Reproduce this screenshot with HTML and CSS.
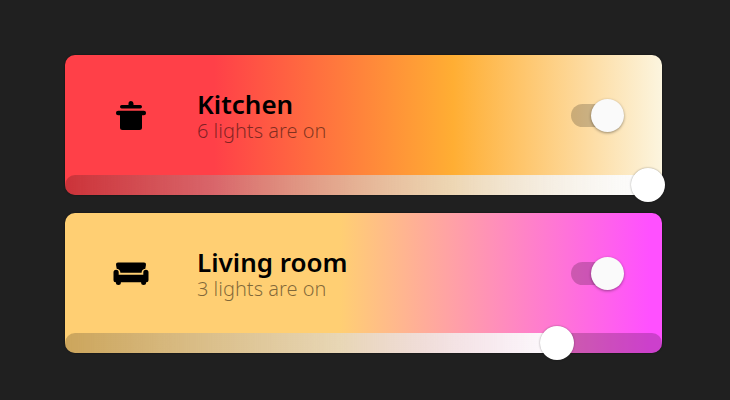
FILE: index.html
```html
<!DOCTYPE html>
<html lang="en">
<head>
<meta charset="utf-8">
<meta name="viewport" content="width=device-width, initial-scale=1">
<title>Lights</title>
<link rel="stylesheet" href="styles.css">
</head>
<body>
<main class="rooms">
  <section class="room room-kitchen">
    <div class="room-body">
      <svg class="room-icon" viewBox="0 0 36 36" aria-hidden="true">
        <path d="M15.500 8V6.400a2.500 2.500 0 0 1 5 0V8H27.300a1.700 1.700 0 0 1 0 3.400H8.700a1.700 1.700 0 0 1 0-3.400z"/>
        <path d="M5.200 13.800H30.800a2.200 2.200 0 0 1 0 4.500H29V30.500a2.500 2.500 0 0 1-2.500 2.500H9.500a2.500 2.500 0 0 1-2.500-2.500V18.300H5.200a2.200 2.200 0 0 1 0-4.500z"/>
      </svg>
      <div class="room-text">
        <h2 class="room-name" id="kitchen">Kitchen</h2>
        <p class="room-status">6 lights are on</p>
      </div>
      <input class="switch" type="checkbox" role="switch" aria-labelledby="kitchen" checked>
    </div>
    <div class="dimmer" style="--level: 100%">
      <input class="dimmer-input" type="range" min="0" max="100" value="100" aria-labelledby="kitchen">
    </div>
  </section>

  <section class="room room-living">
    <div class="room-body">
      <svg class="room-icon" viewBox="0 0 36 36" aria-hidden="true">
        <path d="M5 7.600H31a2 2 0 0 1 2 2.200L32.300 13.700C29.800 13.900 28.700 15.600 28.600 17.700H7.400C7.300 15.600 6.200 13.900 3.700 13.700L3 9.800A2 2 0 0 1 5 7.600z"/>
        <path d="M.5 17.300a2.600 2.600 0 0 1 5.200 0V19.700H30.300V17.300a2.600 2.600 0 0 1 5.200 0V25.200a2 2 0 0 1-2 2H33.100V27.600a2.500 2.500 0 0 1-5 0V27.200H7.900V27.600a2.500 2.500 0 0 1-5 0V27.200H2.500a2 2 0 0 1-2-2z"/>
      </svg>
      <div class="room-text">
        <h2 class="room-name" id="living-room">Living room</h2>
        <p class="room-status">3 lights are on</p>
      </div>
      <input class="switch" type="checkbox" role="switch" aria-labelledby="living-room" checked>
    </div>
    <div class="dimmer" style="--level: 84%">
      <input class="dimmer-input" type="range" min="0" max="100" value="84" aria-labelledby="living-room">
    </div>
  </section>
</main>
</body>
</html>
```
FILE: styles.css
```css
* {
  box-sizing: border-box;
}

body {
  margin: 0;
  min-height: 100vh;
  background: #202020;
  color: #000;
  font-family: "Noto Sans", "Open Sans", sans-serif;
}

.rooms {
  display: grid;
  gap: 18px;
  padding: 55px 68px 47px 65px;
}

.room {
  border-radius: 10px;
  box-shadow: 0 0 2px rgba(0, 0, 0, 0.5);
}

.room-kitchen {
  background: linear-gradient(to right, #ff4048 25%, #ffae33 65%, #fcf5df);
}

.room-living {
  background: linear-gradient(to right, #ffcf73 46%, #ff50ff 98%);
}

.room-body {
  display: flex;
  align-items: center;
  height: 120px;
  padding: 0 38px 0 48px;
}

.room-icon {
  flex: none;
  width: 36px;
  height: 36px;
}

.room-text {
  flex: 1;
  padding: 4px 0 0 48px;
}

.room-name {
  margin: 0;
  font-size: 26px;
  font-weight: 600;
  line-height: 28px;
}

.room-status {
  margin: 0;
  color: rgba(0, 0, 0, 0.5);
  font-size: 20px;
  font-weight: 300;
  line-height: 26px;
}

.switch {
  appearance: none;
  display: grid;
  grid-template-columns: 100%;
  align-items: center;
  width: 53px;
  height: 34px;
  margin: 0;
  cursor: pointer;
}

.switch::before,
.switch::after {
  content: "";
  grid-area: 1 / 1;
}

.switch::before {
  width: 46px;
  height: 23px;
  border-radius: 12px;
  background: rgba(0, 0, 0, 0.2);
}

.switch::after {
  width: 33px;
  height: 33px;
  border-radius: 50%;
  background: #fafafa;
  box-shadow: 0 1px 3px rgba(0, 0, 0, 0.4);
}

.switch:checked::after {
  justify-self: end;
}

.dimmer {
  display: flex;
  height: 20px;
  border-radius: 10px;
  background:
    linear-gradient(to right, rgba(255, 255, 255, 0), #fff) left / var(--level) 100% no-repeat,
    rgba(0, 0, 0, 0.2);
}

.dimmer-input {
  appearance: none;
  flex: 1;
  height: 20px;
  margin: 0 -3px;
  background: none;
  cursor: pointer;
}

.dimmer-input::-webkit-slider-thumb {
  appearance: none;
  width: 34px;
  height: 34px;
  border-radius: 50%;
  background: #fff;
  box-shadow: 0 0 2px rgba(0, 0, 0, 0.4);
}
```
